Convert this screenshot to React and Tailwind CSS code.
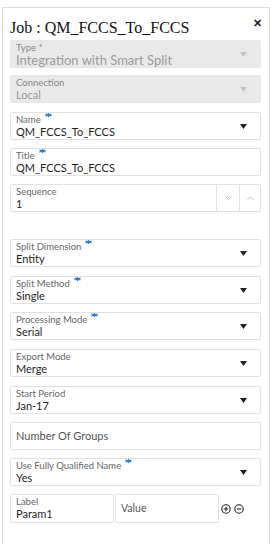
import React from "react";

function Req() {
  return (
    <svg width="7" height="6" viewBox="0 0 7 6" className="ml-[4px] inline-block -translate-y-[4px]">
      <path d="M3.5 0 L3.5 4 M0.5 1.2 L6.5 2.8 M6.5 1.2 L0.5 2.8" stroke="#2f7bc4" strokeWidth="1.3" />
    </svg>
  );
}

function Arrow({ light }) {
  return (
    <svg width="7" height="5" viewBox="0 0 7 5" className="shrink-0">
      <path d="M0 0 L7 0 L3.5 5 Z" fill={light ? "#c4c4c4" : "#222"} />
    </svg>
  );
}

function Field({ label, value, required, arrow = true, disabled, big, className = "" }) {
  return (
    <div
      className={`flex h-[28px] items-center rounded-[2px] border pl-[5px] pr-[13px] ${
        disabled ? "border-[#e6e6e6] bg-[#e9e9e9]" : "border-[#e2e2e2] bg-white"
      } ${className}`}
    >
      <div className="min-w-0 flex-1">
        <div className={`text-[9.5px] leading-[11px] ${disabled ? "text-[#888]" : "text-[#666]"}`}>
          {label}
          {required && <Req />}
        </div>
        <div
          className={`${big ? "text-[13px]" : "text-[11px]"} leading-[14px] ${
            disabled ? "text-[#9a9a9a]" : "text-[#1f1f1f]"
          }`}
        >
          {value}
        </div>
      </div>
      {arrow && <Arrow light={disabled} />}
    </div>
  );
}

export default function App() {
  return (
    <div className="h-[544px] w-[277px] overflow-hidden bg-white" style={{ fontFamily: 'Lato, "Noto Sans", sans-serif' }}>
      <div className="ml-[2px] mt-[7px] h-[600px] w-[268px] border border-[#dcdcdc] bg-white pl-[7px] pr-[8px]">
        <div className="flex items-start justify-between pt-[11px]">
          <h1 className="text-[16px] leading-[18px] text-[#111]" style={{ fontFamily: '"Liberation Serif", serif' }}>
            Job : QM_FCCS_To_FCCS
          </h1>
          <span className="-mt-[3px] mr-[-1px] text-[11px] font-bold leading-[14px] text-[#222]">✕</span>
        </div>

        <Field className="mt-[3px]" label="Type *" value="Integration with Smart Split" disabled big />
        <Field className="mt-[7px]" label="Connection" value="Local" disabled />
        <Field className="mt-[9px]" label="Name" value="QM_FCCS_To_FCCS" required />
        <Field className="mt-[8px]" label="Title" value="QM_FCCS_To_FCCS" required arrow={false} />

        <div className="mt-[8px] flex h-[28px] rounded-[2px] border border-[#e2e2e2] bg-white">
          <div className="flex flex-1 flex-col justify-center pl-[5px]">
            <div className="text-[9.5px] leading-[11px] text-[#666]">Sequence</div>
            <div className="text-[11px] leading-[14px] text-[#1f1f1f]">1</div>
          </div>
          <div className="flex w-[23px] items-center justify-center border-l border-[#e2e2e2]">
            <svg width="7" height="5" viewBox="0 0 7 5"><path d="M0.5 0.5 L3.5 3.5 L6.5 0.5" stroke="#bbb" fill="none" strokeWidth="1" /></svg>
          </div>
          <div className="flex w-[21px] items-center justify-center border-l border-[#e2e2e2]">
            <svg width="7" height="5" viewBox="0 0 7 5"><path d="M0.5 4 L3.5 1 L6.5 4" stroke="#bbb" fill="none" strokeWidth="1" /></svg>
          </div>
        </div>

        <Field className="mt-[27px]" label="Split Dimension" value="Entity" required />
        <Field className="mt-[9px]" label="Split Method" value="Single" required />
        <Field className="mt-[8px]" label="Processing Mode" value="Serial" required />
        <Field className="mt-[9px]" label="Export Mode" value="Merge" />
        <Field className="mt-[9px]" label="Start Period" value="Jan-17" />

        <div className="mt-[8px] flex h-[28px] items-center rounded-[2px] border border-[#e2e2e2] bg-white pl-[5px] text-[11px] text-[#555]">
          Number Of Groups
        </div>

        <Field className="mt-[8px]" label="Use Fully Qualified Name" value="Yes" required />

        <div className="mt-[8px] flex items-center">
          <div className="flex h-[29px] w-[104px] flex-col justify-center rounded-[2px] border border-[#e2e2e2] bg-white pl-[5px]">
            <div className="text-[9.5px] leading-[11px] text-[#666]">Label</div>
            <div className="text-[11px] leading-[14px] text-[#1f1f1f]">Param1</div>
          </div>
          <div className="ml-[1px] flex h-[29px] w-[104px] items-center rounded-[2px] border border-[#e2e2e2] bg-white pl-[5px] text-[10.5px] text-[#555]">
            Value
          </div>
          <div className="ml-[2px] flex gap-[3px]">
            <svg width="10" height="10" viewBox="0 0 10 10">
              <circle cx="5" cy="5" r="4.2" fill="none" stroke="#222" strokeWidth="1.1" />
              <path d="M2.8 5 H7.2 M5 2.8 V7.2" stroke="#222" strokeWidth="1.1" />
            </svg>
            <svg width="10" height="10" viewBox="0 0 10 10">
              <circle cx="5" cy="5" r="4.2" fill="none" stroke="#222" strokeWidth="1.1" />
              <path d="M2.8 5 H7.2" stroke="#222" strokeWidth="1.1" />
            </svg>
          </div>
        </div>
      </div>
    </div>
  );
}
